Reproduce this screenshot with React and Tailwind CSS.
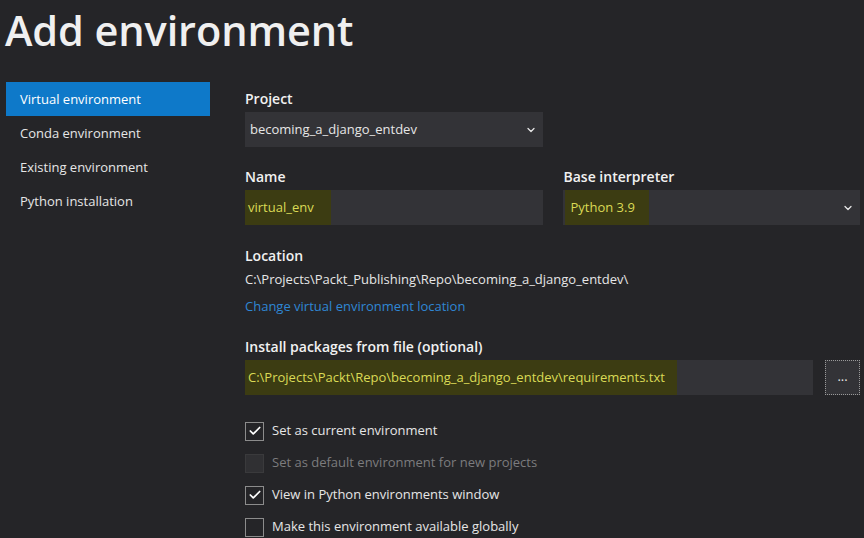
import { ChevronDown, Check } from 'lucide-react'

const menu = ['Virtual environment', 'Conda environment', 'Existing environment', 'Python installation']

const options = [
  { label: 'Set as current environment', checked: true },
  { label: 'Set as default environment for new projects', disabled: true },
  { label: 'View in Python environments window', checked: true },
  { label: 'Make this environment available globally' },
]

function Label({ children, className = '' }) {
  return <div className={`h-5 leading-5 text-[14px] font-semibold text-[#f1f1f1] ${className}`}>{children}</div>
}

function Highlight({ children, className = '' }) {
  return <span className={`h-full flex items-center pl-[3px] bg-[#3c3c12] text-[#dada55] ${className}`}>{children}</span>
}

function Field({ children, chevron }) {
  return (
    <div className="h-[35px] bg-[#333337] flex items-center pr-[6px]">
      <div className="flex-1 h-full flex items-center">{children}</div>
      {chevron && <ChevronDown size={12} strokeWidth={2.5} className="text-[#e8e8e8]" />}
    </div>
  )
}

export default function App() {
  return (
    <div className="w-[864px] h-[538px] overflow-hidden bg-[#252528] text-[#e6e6e6] text-[13px]" style={{ fontFamily: '"Open Sans", "Noto Sans", sans-serif' }}>
      <h1 className="pl-[5px] h-[82px] text-[41.5px] leading-[60px] text-[#f0f0f0] font-semibold tracking-[-0.1px]">Add environment</h1>

      <div className="flex">
        {/* sidebar */}
        <div className="ml-[6px] w-[204px] flex flex-col">
          {menu.map((m, i) => (
            <div key={m} className={`h-[34px] flex items-center pl-[14px] pt-[1px] ${i === 0 ? 'bg-[#0e79c9] text-white' : 'text-[#e6e6e6]'}`}>
              {m}
            </div>
          ))}
        </div>

        {/* content */}
        <div className="ml-[35px] w-[615px] flex flex-col">
          <Label className="mt-[7px]">Project</Label>
          <div className="mt-[3px] w-[298px]">
            <Field chevron>
              <span className="pl-[5px]">becoming_a_django_entdev</span>
            </Field>
          </div>

          <div className="mt-[20px] grid grid-cols-2 gap-x-[20px]">
            <div>
              <Label>Name</Label>
              <div className="mt-[3px]">
                <Field>
                  <Highlight className="pr-[17px]">virtual_env</Highlight>
                </Field>
              </div>
            </div>
            <div>
              <Label className="pl-[1px]">Base interpreter</Label>
              <div className="mt-[3px]">
                <Field chevron>
                  <div className="pl-[2px] h-full flex">
                    <Highlight className="pl-[6px] pr-[14px]">Python 3.9</Highlight>
                  </div>
                </Field>
              </div>
            </div>
          </div>

          <Label className="mt-[21px]">Location</Label>
          <div className="mt-[3px] h-5 leading-5">C:\Projects\Packt_Publishing\Repo\becoming_a_django_entdev\</div>
          <a className="mt-[7px] h-5 leading-5 text-[#2f87d4]">Change virtual environment location</a>

          <Label className="mt-[21px]">Install packages from file (optional)</Label>
          <div className="mt-[3px] flex gap-[12px]">
            <div className="flex-1">
              <Field>
                <Highlight className="pr-[12px]">C:\Projects\Packt\Repo\becoming_a_django_entdev\requirements.txt</Highlight>
              </Field>
            </div>
            <button className="w-[35px] h-[35px] bg-[#333337] border border-dotted border-[#9a9a9a] text-[#e6e6e6] flex items-center justify-center leading-none pb-[2px]">
              ...
            </button>
          </div>

          <div className="mt-[20px] flex flex-col">
            {options.map((o) => (
              <div key={o.label} className="h-[32px] flex items-center gap-[8px]">
                <div className={`w-[19px] h-[19px] flex items-center justify-center border ${o.disabled ? 'border-[#3a3a3c] bg-[#303033]' : 'border-[#8c8c8c]'}`}>
                  {o.checked && <Check size={14} strokeWidth={3} className="text-white" />}
                </div>
                <span className={o.disabled ? 'text-[#7c7c7e]' : 'text-[#e6e6e6]'}>{o.label}</span>
              </div>
            ))}
          </div>
        </div>
      </div>
    </div>
  )
}
